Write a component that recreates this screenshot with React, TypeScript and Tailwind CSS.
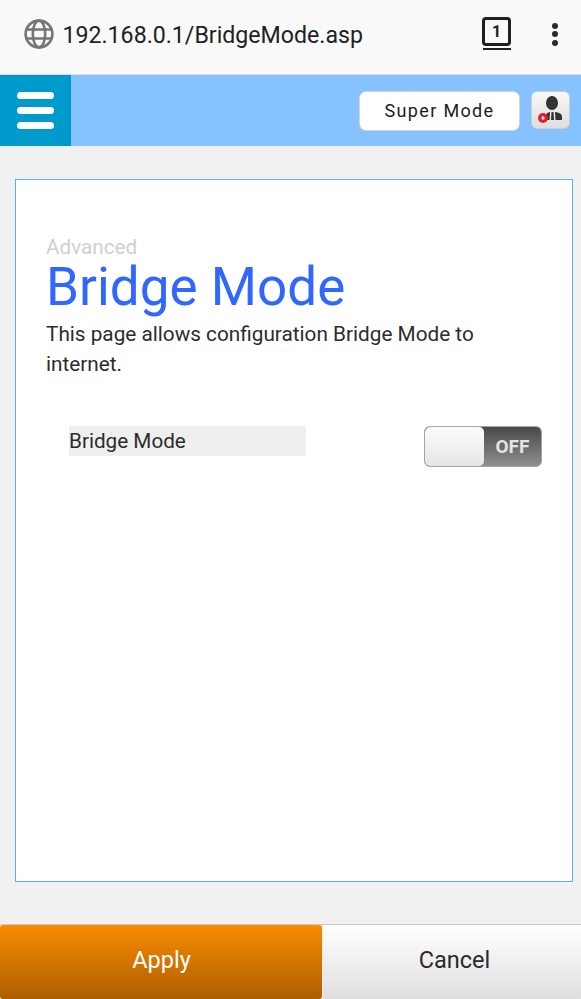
export default function App() {
  return (
    <div className="flex h-[999px] w-[581px] flex-col overflow-hidden bg-[#f1f1f1] font-['Roboto',sans-serif]">
      {/* Browser bar */}
      <div className="flex h-[75px] shrink-0 items-center border-b border-[#dcdcdc] bg-[#f9f9f9] pb-[3px] pl-[24px]">
        <svg width="30" height="30" viewBox="0 0 30 30" fill="none" stroke="#757575" strokeWidth="2.6" className="mb-[3px] shrink-0">
          <circle cx="15" cy="15" r="13.4" />
          <ellipse cx="15" cy="15" rx="6.2" ry="13.4" />
          <path d="M2.5 10.5H27.5M2.5 19.5H27.5" />
        </svg>
        <span className="ml-[8.5px] text-[23.15px] leading-[30px] text-[#222222]">192.168.0.1/BridgeMode.asp</span>
        <div className="ml-auto flex items-center">
          <div className="mb-[4px] flex flex-col items-center">
            <div className="flex h-[29px] w-[29px] items-center justify-center rounded-[4px] border-[3px] border-[#202020] text-[16px] font-bold leading-none text-[#202020]">1</div>
            <div className="mt-[2px] h-[2px] w-[28px] bg-[#202020]" />
          </div>
          <div className="mb-[3px] ml-[41px] mr-[23px] flex flex-col gap-[2.5px]">
            <div className="h-[6px] w-[6px] rounded-full bg-[#2a2a2a]" />
            <div className="h-[6px] w-[6px] rounded-full bg-[#2a2a2a]" />
            <div className="h-[6px] w-[6px] rounded-full bg-[#2a2a2a]" />
          </div>
        </div>
      </div>

      {/* App header */}
      <div className="flex h-[71px] shrink-0 items-center bg-[#85c2ff]">
        <div className="flex h-full w-[71px] flex-col items-center justify-center gap-[7.5px] bg-[#009acd]">
          <div className="h-[7.5px] w-[37px] rounded-full bg-white" />
          <div className="h-[7.5px] w-[37px] rounded-full bg-white" />
          <div className="h-[7.5px] w-[37px] rounded-full bg-white" />
        </div>
        <div className="ml-auto flex items-center pr-[11px]">
          <div className="flex h-[40px] w-[161px] items-center justify-center rounded-[7px] border border-[#cfd4da] bg-white text-[18px] tracking-[1.35px] text-[#1c1c1c]">Super Mode</div>
          <div className="mb-[1px] ml-[11px] flex h-[38px] w-[39px] items-center justify-center rounded-[6px] border border-[#c9ced3] bg-gradient-to-b from-[#f8f8f8] to-[#dedede]">
            <svg width="34" height="34" viewBox="0 0 34 34">
              <ellipse cx="18" cy="10" rx="6" ry="7" fill="#333333" />
              <path d="M16 19L15.5 27H11.5V23C11.5 21 13.5 19.5 16 19Z" fill="#333333" />
              <path d="M21 19C25 19.5 28 21 28 23.5V27H21.5Z" fill="#333333" />
              <path d="M17.5 19H19.5L20 27H17Z" fill="#333333" />
              <circle cx="9" cy="25" r="5" fill="#e0202e" />
              <circle cx="9" cy="25" r="1.7" fill="#f6dfe0" />
            </svg>
          </div>
        </div>
      </div>

      {/* Content card */}
      <div className="ml-[15px] mt-[33px] flex h-[703px] w-[558px] shrink-0 flex-col border border-[#62b0dc] bg-white px-[30px] pt-[55px]">
        <div className="text-[20.7px] leading-[24px] text-[#cfcfcf]">Advanced</div>
        <h1 className="text-[53px] font-normal leading-[56px] text-[#3068ff]">Bridge Mode</h1>
        <p className="mt-[4px] text-[20.75px] leading-[30px] text-[#2c2c2c]">This page allows configuration Bridge Mode to internet.</p>
        <div className="mt-[47px] flex items-start">
          <div className="ml-[23px] h-[30px] w-[237px] bg-[#efefef] text-[20.7px] leading-[30px] text-[#2c2c2c]">Bridge Mode</div>
          <div className="ml-auto flex h-[41px] w-[118px] overflow-hidden rounded-[6px] border border-[#a5a5a5] bg-gradient-to-b from-[#4a4a4a] to-[#8f8f8f]">
            <div className="h-full w-[59px] rounded-[5px] bg-gradient-to-b from-[#fbfbfb] to-[#e6e6e6]" />
            <div className="flex flex-1 items-center justify-center text-[19px] font-bold leading-none text-[#e4e4e4]">OFF</div>
          </div>
        </div>
      </div>

      {/* Footer */}
      <div className="mt-auto flex h-[75px] shrink-0 border-t border-[#cccccc]">
        <div className="flex h-full w-[322px] items-center justify-center rounded-[3px] bg-gradient-to-b from-[#fa8c00] to-[#ad5e00] pb-[2px] pl-[1px] text-[23.5px] text-white">Apply</div>
        <div className="ml-[1px] flex h-full flex-1 items-center justify-center bg-gradient-to-b from-[#ffffff] to-[#dfdfdf] pb-[2px] pl-[5px] text-[23.5px] text-[#2a2a2a]">Cancel</div>
      </div>
    </div>
  );
}
